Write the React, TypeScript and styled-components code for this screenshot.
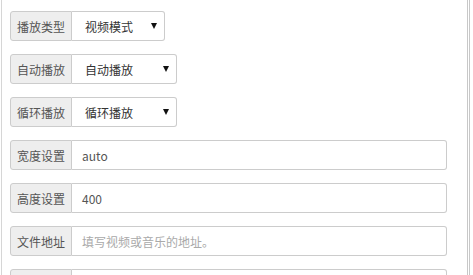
import React, { FC } from 'react';
import styled, { createGlobalStyle } from 'styled-components';

const GlobalStyle = createGlobalStyle`
  html, body {
    margin: 0;
    padding: 0;
    background: #fff;
  }
  body {
    font-family: "Noto Sans CJK SC", "Liberation Sans", Arial, sans-serif;
    font-size: 12px;
    color: #555;
  }
`;

const Frame = styled.div`
  width: 473px;
  height: 275px;
  box-sizing: border-box;
  overflow: hidden;
  display: flex;
`;

const Panel = styled.div`
  flex: 1;
  margin-left: 1px;
  border-left: 1px solid #d6d6d6;
  padding: 11px 0 0 8px;
  display: flex;
  flex-direction: column;
  gap: 13px;
`;

const Edge = styled.div`
  width: 2px;
  margin: 0 3px 0 20px;
  border-left: 1px solid #c8c8c8;
  border-right: 1px solid #c8c8c8;
`;

const Group = styled.div<{ $width?: number }>`
  display: flex;
  flex-shrink: 0;
  height: 30px;
  width: ${p => (p.$width ? `${p.$width}px` : '437px')};
  box-sizing: border-box;
`;

const Addon = styled.span`
  display: flex;
  align-items: center;
  justify-content: center;
  width: 62px;
  box-sizing: border-box;
  background: #eee;
  border: 1px solid #ccc;
  border-radius: 3px 0 0 3px;
  color: #555;
  font-size: 12px;
  white-space: nowrap;
`;

const SelectBox = styled.div`
  flex: 1;
  display: flex;
  align-items: center;
  justify-content: space-between;
  padding: 0 7px 0 13px;
  border: 1px solid #ccc;
  border-left: none;
  border-radius: 0 3px 3px 0;
  background: #fff;
  color: #333;
  font-size: 12px;
`;

const Arrow = styled.span`
  width: 0;
  height: 0;
  border-left: 3px solid transparent;
  border-right: 3px solid transparent;
  border-top: 6px solid #111;
`;

const Field = styled.div<{ $placeholder?: boolean }>`
  flex: 1;
  display: flex;
  align-items: center;
  padding: 0 10px;
  border: 1px solid #ccc;
  border-left: none;
  border-radius: 0 3px 3px 0;
  background: #fff;
  color: ${p => (p.$placeholder ? '#a9a9a9' : '#555')};
  font-size: 12px;
`;

interface ISelectRow {
  label: string;
  value: string;
  width: number;
}

const selects: ISelectRow[] = [
  { label: '播放类型', value: '视频模式', width: 155 },
  { label: '自动播放', value: '自动播放', width: 167 },
  { label: '循环播放', value: '循环播放', width: 167 },
];

const inputs = [
  { label: '宽度设置', value: 'auto', placeholder: false },
  { label: '高度设置', value: '400', placeholder: false },
  { label: '文件地址', value: '填写视频或音乐的地址。', placeholder: true },
  { label: '', value: '', placeholder: true },
];

const App: FC = () => {
  return (
    <>
      <GlobalStyle />
      <Frame>
        <Panel>
          {selects.map(row => (
            <Group key={row.label} $width={row.width}>
              <Addon>{row.label}</Addon>
              <SelectBox>
                <span>{row.value}</span>
                <Arrow />
              </SelectBox>
            </Group>
          ))}
          {inputs.map((row, i) => (
            <Group key={`${i}${row.label}`}>
              <Addon>{row.label}</Addon>
              <Field $placeholder={row.placeholder}>{row.value}</Field>
            </Group>
          ))}
        </Panel>
        <Edge />
      </Frame>
    </>
  );
};

export default App;
